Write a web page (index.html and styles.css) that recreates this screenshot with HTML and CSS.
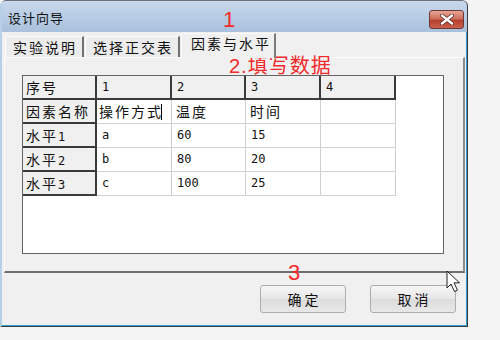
FILE: index.html
```html
<!DOCTYPE html>
<html lang="zh-CN">
<head>
    <meta charset="UTF-8">
    <title>设计向导</title>
    <link rel="stylesheet" href="styles.css">
</head>
<body>
    <div class="window">
        <div class="titlebar">
            <span class="title">设计向导</span>
            <button class="close" aria-label="关闭">
                <svg width="16" height="11" viewBox="0 0 16 11">
                    <path d="M3 1.5 L13 9.5 M13 1.5 L3 9.5" stroke="#5a2a25" stroke-width="4" stroke-linecap="round"/>
                    <path d="M3 1.5 L13 9.5 M13 1.5 L3 9.5" stroke="#fff" stroke-width="2.4" stroke-linecap="round"/>
                </svg>
            </button>
        </div>
        <div class="client">
            <div class="tabs">
                <div class="tab">实验说明</div>
                <div class="tab">选择正交表</div>
                <div class="tab active">因素与水平</div>
            </div>
            <div class="panel">
                <div class="gridbox">
                    <div class="grid">
                        <div class="cell fixed">序号</div>
                        <div class="cell fixed num">1</div>
                        <div class="cell fixed num">2</div>
                        <div class="cell fixed num">3</div>
                        <div class="cell fixed num">4</div>

                        <div class="cell fixed">因素名称</div>
                        <div class="cell editing">操作方式<span class="caret"></span></div>
                        <div class="cell">温度</div>
                        <div class="cell">时间</div>
                        <div class="cell"></div>

                        <div class="cell fixed">水平<span class="sub">1</span></div>
                        <div class="cell num">a</div>
                        <div class="cell num">60</div>
                        <div class="cell num">15</div>
                        <div class="cell"></div>

                        <div class="cell fixed">水平<span class="sub">2</span></div>
                        <div class="cell num">b</div>
                        <div class="cell num">80</div>
                        <div class="cell num">20</div>
                        <div class="cell"></div>

                        <div class="cell fixed">水平<span class="sub">3</span></div>
                        <div class="cell num">c</div>
                        <div class="cell num">100</div>
                        <div class="cell num">25</div>
                        <div class="cell"></div>
                    </div>
                </div>
            </div>
            <div class="buttons">
                <button class="btn">确定</button>
                <button class="btn">取消</button>
            </div>
        </div>
    </div>

    <!-- red step notes drawn over the screenshot -->
    <span class="note note-1">1</span>
    <span class="note note-2">2.填写数据</span>
    <span class="note note-3">3</span>

    <svg class="cursor" width="15" height="23" viewBox="0 0 15 23">
        <path d="M1 1 L1 18 L5 14 L8.5 21.5 L11.5 20.2 L8 12.8 L13.5 12.8 Z" fill="#fff" stroke="#222" stroke-width="1" stroke-linejoin="round"/>
    </svg>
</body>
</html>
```

FILE: styles.css
```css
body {
    margin: 0;
    width: 500px;
    height: 340px;
    background-color: #f4f4f4;
    font-family: "Noto Sans CJK SC", "DejaVu Sans", sans-serif;
    position: relative;
    overflow: hidden;
}
.window {
    width: 465px;
    height: 325px;
    border-top: 1px solid #6a6f78;
    border-left: 2px solid #b8cfe8;
    border-right: 1px solid #3c3c3c;
    border-bottom: 1px solid #3c3c3c;
    border-radius: 6px 6px 0 0;
    background-color: #f0f0f0;
    box-shadow: inset -1px -1px 0 #2f9fd4;
    display: flex;
    flex-direction: column;
}
.titlebar {
    height: 31px;
    flex-shrink: 0;
    display: flex;
    justify-content: space-between;
    align-items: flex-start;
    background: linear-gradient(#c7d8ec, #a9c1dd);
    border-radius: 5px 5px 0 0;
}
.title {
    margin: 8px 0 0 6px;
    font-size: 13px;
    letter-spacing: 1px;
    color: #111;
    line-height: 18px;
}
.close {
    margin: 9px 3px 0 0;
    width: 35px;
    height: 19px;
    padding: 0;
    border: 1px solid #6b3a36;
    border-radius: 3px;
    background: linear-gradient(#e6a596, #d0705f 45%, #b9402f 55%, #c9604c);
    display: flex;
    justify-content: center;
    align-items: center;
}
.client {
    flex: 1;
    display: flex;
    flex-direction: column;
    padding: 1px 2px 0 2px;
}
.tabs {
    height: 24px;
    display: flex;
    align-items: flex-end;
    padding-left: 1px;
    position: relative;
    z-index: 1;
}
.tab {
    height: 21px;
    box-sizing: border-box;
    padding: 0 5px 0 7px;
    font-size: 14px;
    letter-spacing: 2px;
    line-height: 21px;
    color: #111;
    background-color: #ececec;
    border-top: 1px solid #fafafa;
    border-left: 1px solid #fafafa;
    border-right: 2px solid #707070;
    margin-right: 1px;
}
.tab.active {
    height: 25px;
    margin-bottom: -1px;
    padding: 0 3px 4px 9px;
    background-color: #f0f0f0;
    border-right: 2px solid #7a7a7a;
    line-height: 19px;
}
.panel {
    height: 216px;
    box-sizing: border-box;
    background-color: #f0f0f0;
    border-top: 1px solid #fcfcfc;
    border-left: 1px solid #fcfcfc;
    border-right: 2px solid #8c8c8c;
    border-bottom: 2px solid #6e6e6e;
    padding: 17px 0 0 17px;
}
.gridbox {
    width: 422px;
    height: 179px;
    box-sizing: border-box;
    border: 1px solid #646464;
    background-color: #fff;
}
.grid {
    display: grid;
    grid-template-columns: 74px 75px 74px 75px 75px;
    grid-auto-rows: 24px;
}
.cell {
    box-sizing: border-box;
    border-right: 1px solid #cfcfcf;
    border-bottom: 1px solid #cfcfcf;
    padding-left: 4px;
    font-size: 14px;
    letter-spacing: 2px;
    line-height: 22px;
    color: #111;
    white-space: nowrap;
    overflow: hidden;
}
.cell.fixed {
    background-color: #f0f0f0;
    border-right: 2px solid #3a3a3a;
    border-bottom: 2px solid #3a3a3a;
    padding-left: 3px;
}
.cell.editing {
    padding-left: 2px;
}
.num,
.sub {
    font-family: "DejaVu Sans Mono", monospace;
    font-size: 12px;
    letter-spacing: 0;
}
.cell.num {
    padding-left: 5px;
    line-height: 23px;
}
.caret {
    display: inline-block;
    width: 1px;
    height: 16px;
    background-color: #000;
    vertical-align: -3px;
    margin-left: -2px;
}
.buttons {
    display: flex;
    justify-content: flex-end;
    gap: 24px;
    margin-top: 12px;
    padding-right: 9px;
}
.btn {
    width: 86px;
    height: 28px;
    border: 1px solid #adadad;
    border-radius: 3px;
    background: linear-gradient(#f6f6f6, #e6e6e6 50%, #dcdcdc 51%, #e8e8e8);
    font-family: "Noto Sans CJK SC", sans-serif;
    font-size: 14px;
    letter-spacing: 3px;
    padding: 0 0 0 3px;
    color: #111;
}
.note {
    position: absolute;
    color: #f22a2a;
    font-family: "Liberation Sans", "Noto Sans CJK SC", sans-serif;
    line-height: 1;
}
.note-1 {
    left: 223px;
    top: 9px;
    font-size: 22px;
}
.note-2 {
    left: 229px;
    top: 56px;
    font-size: 20px;
    letter-spacing: 1px;
}
.note-3 {
    left: 288px;
    top: 262px;
    font-size: 22px;
}
.cursor {
    position: absolute;
    left: 446px;
    top: 270px;
}
```
